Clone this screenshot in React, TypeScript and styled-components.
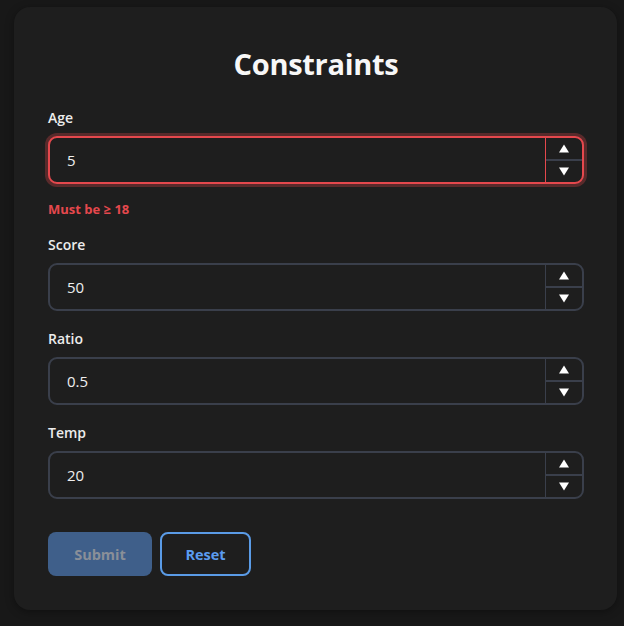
import React, { useState } from 'react'
import styled, { createGlobalStyle } from 'styled-components'

const GlobalStyle = createGlobalStyle`
  html, body {
    margin: 0;
    padding: 0;
    background: #181818;
  }
  body {
    font-family: 'Open Sans', 'Noto Sans', sans-serif;
    color: #f2f2f2;
  }
`

type FieldDef = {
  name: string
  label: string
  value: string
  error?: string
}

const fields: FieldDef[] = [
  { name: 'age', label: 'Age', value: '5', error: 'Must be ≥ 18' },
  { name: 'score', label: 'Score', value: '50' },
  { name: 'ratio', label: 'Ratio', value: '0.5' },
  { name: 'temp', label: 'Temp', value: '20' },
]

const Arrow = ({ down }: { down?: boolean }) => (
  <svg width="10" height="9" viewBox="0 0 10 9">
    <path d={down ? 'M0 0.5 H10 L5 8.5 Z' : 'M5 0.5 L10 8.5 H0 Z'} fill="#ffffff" />
  </svg>
)

const App = () => {
  const [values, setValues] = useState<Record<string, string>>(
    Object.fromEntries(fields.map((f) => [f.name, f.value])),
  )

  return (
    <>
      <GlobalStyle />
      <Page>
        <Card>
          <Title>Constraints</Title>
          <Form onSubmit={(e) => e.preventDefault()}>
            {fields.map((f) => (
              <Field key={f.name}>
                <Label htmlFor={f.name}>{f.label}</Label>
                <InputBox $invalid={!!f.error}>
                  <Input
                    id={f.name}
                    value={values[f.name]}
                    onChange={(e) => setValues({ ...values, [f.name]: e.target.value })}
                  />
                  <Spinner $invalid={!!f.error}>
                    <SpinButton type="button" aria-label="Increment">
                      <Arrow />
                    </SpinButton>
                    <SpinButton type="button" aria-label="Decrement">
                      <Arrow down />
                    </SpinButton>
                  </Spinner>
                </InputBox>
                {f.error && <ErrorMessage>{f.error}</ErrorMessage>}
              </Field>
            ))}
            <Actions>
              <SubmitButton type="submit" disabled>
                Submit
              </SubmitButton>
              <ResetButton type="button">Reset</ResetButton>
            </Actions>
          </Form>
        </Card>
      </Page>
    </>
  )
}

export default App

const Page = styled.div`
  padding: 7px 7px 17px 14px;
`

const Card = styled.div`
  width: 603px;
  box-sizing: border-box;
  padding: 34px 33px 34px 34px;
  background: #1e1e1e;
  border-radius: 16px;
  box-shadow: 0 2px 8px rgba(0, 0, 0, 0.35);
`

const Title = styled.h1`
  margin: 0 0 22px;
  font-size: 29px;
  line-height: 46px;
  font-weight: 700;
  text-align: center;
  color: #f7f7f7;
  letter-spacing: -0.3px;
`

const Form = styled.form`
  display: flex;
  flex-direction: column;
  gap: 19px;
`

const Field = styled.div`
  display: flex;
  flex-direction: column;
  gap: 9px;
`

const Label = styled.label`
  font-size: 14px;
  line-height: 18px;
  font-weight: 600;
  color: #ececec;
`

const InputBox = styled.div<{ $invalid?: boolean }>`
  display: flex;
  height: 48px;
  box-sizing: border-box;
  border: 2px solid ${(p) => (p.$invalid ? '#e5484d' : '#3a3f4b')};
  border-radius: 9px;
  background: #1e1e1e;
  box-shadow: ${(p) => (p.$invalid ? '0 0 0 3px rgba(229, 72, 77, 0.3)' : 'none')};
  overflow: hidden;
`

const Input = styled.input`
  flex: 1;
  min-width: 0;
  border: none;
  outline: none;
  background: transparent;
  padding: 0 17px;
  font-family: inherit;
  font-size: 15px;
  color: #eeeeee;
`

const Spinner = styled.div<{ $invalid?: boolean }>`
  width: 36px;
  display: flex;
  flex-direction: column;
  border-left: 1px solid ${(p) => (p.$invalid ? '#e5484d' : '#3a3f4b')};
`

const SpinButton = styled.button`
  flex: 1;
  display: flex;
  align-items: center;
  justify-content: center;
  border: none;
  background: transparent;
  padding: 0;
  cursor: pointer;
  & + & {
    border-top: 2px solid #3a3f4b;
  }
`

const ErrorMessage = styled.div`
  margin-top: 8px;
  font-size: 13px;
  line-height: 16px;
  font-weight: 700;
  color: #e5484d;
`

const Actions = styled.div`
  display: flex;
  gap: 8px;
  margin-top: 14px;
`

const BaseButton = styled.button`
  height: 44px;
  box-sizing: border-box;
  border-radius: 8px;
  font-family: inherit;
  font-size: 14.5px;
  font-weight: 700;
  cursor: pointer;
`

const SubmitButton = styled(BaseButton)`
  width: 104px;
  border: none;
  background: #3f5f8a;
  color: #8a8f98;
  &:disabled {
    cursor: not-allowed;
  }
`

const ResetButton = styled(BaseButton)`
  width: 91px;
  border: 2px solid #5a9be6;
  background: transparent;
  color: #5b9cf0;
`
